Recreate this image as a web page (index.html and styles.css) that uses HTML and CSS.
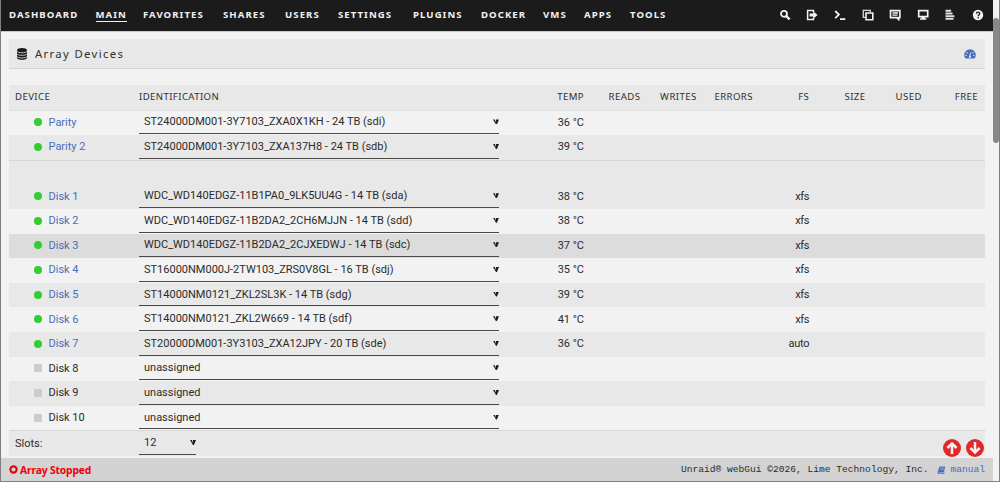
FILE: index.html
```
<!DOCTYPE html>
<html lang="en">
    <head>
        <meta charset="utf-8">
        <title>Main</title>
        <link rel="stylesheet" href="styles.css">
    </head>
    <body>
        <div id="page">
            <div id="header">
                <div class="tabs">
                    <a>DASHBOARD</a><a class="active">MAIN</a><a>FAVORITES</a><a>SHARES</a><a>USERS</a><a>SETTINGS</a><a>PLUGINS</a><a>DOCKER</a><a>VMS</a><a>APPS</a><a>TOOLS</a>
                </div>
                <div class="tools">
                    <svg viewBox="0 0 12 12"><circle cx="5" cy="4.8" r="3" fill="none" stroke="#f2f2f2" stroke-width="1.8"/><path d="M7.2 7l3.4 3.4" stroke="#f2f2f2" stroke-width="2.4"/></svg>
                    <svg viewBox="0 0 12 12"><path d="M7.5 3V1.5H1.6v9h5.9V9" fill="none" stroke="#f2f2f2" stroke-width="1.5"/><path d="M3.6 4.6h3.6V2.2L11.6 6 7.2 9.8V7.4H3.6z" fill="#f2f2f2"/></svg>
                    <svg viewBox="0 0 12 12"><path d="M1.2 2l3.7 3.6-3.7 3.6M6 10.2h5.3" fill="none" stroke="#f2f2f2" stroke-width="1.8"/></svg>
                    <svg viewBox="0 0 12 12"><path d="M3 8.3H1.3V1.3h7V3" fill="none" stroke="#d8d8d8" stroke-width="1.3"/><path d="M4 4h6.8v6.8H4z" fill="none" stroke="#f2f2f2" stroke-width="1.6"/></svg>
                    <svg viewBox="0 0 12 12"><path d="M1.5 1.6h9.4v7H9.6v1.9L7.7 8.6H1.5z" fill="none" stroke="#f2f2f2" stroke-width="1.6"/><path d="M3.5 4h5.5M3.5 6.1h5" stroke="#f2f2f2" stroke-width="1.4"/></svg>
                    <svg viewBox="0 0 12 12"><path d="M1.7 1.7h9v6h-9z" fill="none" stroke="#f2f2f2" stroke-width="1.7"/><path d="M4.6 8h3.2v1.3h1.5v1.5H3.1V9.3h1.5z" fill="#f2f2f2"/></svg>
                    <svg viewBox="0 0 12 12"><path d="M1.5 1.8h5.6M1.5 4.5h7M1.5 7.2h8.9M1.5 9.9h8" stroke="#e2e2e2" stroke-width="1.9"/></svg>
                    <svg viewBox="0 0 12 12"><circle cx="6" cy="6" r="5.2" fill="#f2f2f2"/><path d="M4.4 4.8c0-2.3 3.4-2.1 3.4-.3 0 1.2-1.6 1.1-1.6 2.5M6.2 7.8v1.4" fill="none" stroke="#1c1b1b" stroke-width="1.3"/></svg>
                </div>
            </div>

            <div class="title">
                <svg class="db" viewBox="0 0 10 12"><path d="M0 2.2C0-.6 10-.6 10 2.2v7.5c0 2.8-10 2.8-10 0z" fill="#1c1b1b"/><path d="M0 3.3c1 1.9 9 1.9 10 0M0 5.9c1 1.9 9 1.9 10 0M0 8.5c1 1.9 9 1.9 10 0" fill="none" stroke="#e8e8e8" stroke-width=".8"/></svg>
                <span>Array Devices</span>
                <svg class="gauge" viewBox="0 0 12 10"><path d="M1.4 9.6A5.8 5.8 0 1 1 10.6 9.6z" fill="#486dba"/><path d="M5.5 8l1.2-4.4" stroke="#e8e8e8" stroke-width="1"/><g fill="#e8e8e8"><circle cx="6" cy="8" r="1.1"/><circle cx="2.1" cy="6.4" r=".7"/><circle cx="3.1" cy="3.7" r=".7"/><circle cx="9" cy="3.7" r=".7"/><circle cx="9.9" cy="6.4" r=".7"/></g></svg>
            </div>

            <div class="disks">
                <div class="row head"><span>DEVICE</span><span>IDENTIFICATION</span><span>TEMP</span><span>READS</span><span>WRITES</span><span>ERRORS</span><span>FS</span><span>SIZE</span><span>USED</span><span>FREE</span></div>
                <div class="row"><a class="disk">Parity</a><div class="select">ST24000DM001-3Y7103_ZXA0X1KH - 24 TB (sdi)</div><span class="temp">36 °C</span></div>
                <div class="row odd"><a class="disk">Parity 2</a><div class="select">ST24000DM001-3Y7103_ZXA137H8 - 24 TB (sdb)</div><span class="temp">39 °C</span></div>
                <div class="row odd line"></div>
                <div class="row odd"><a class="disk">Disk 1</a><div class="select">WDC_WD140EDGZ-11B1PA0_9LK5UU4G - 14 TB (sda)</div><span class="temp">38 °C</span><span class="fs">xfs</span></div>
                <div class="row"><a class="disk">Disk 2</a><div class="select">WDC_WD140EDGZ-11B2DA2_2CH6MJJN - 14 TB (sdd)</div><span class="temp">38 °C</span><span class="fs">xfs</span></div>
                <div class="row hover"><a class="disk">Disk 3</a><div class="select">WDC_WD140EDGZ-11B2DA2_2CJXEDWJ - 14 TB (sdc)</div><span class="temp">37 °C</span><span class="fs">xfs</span></div>
                <div class="row"><a class="disk">Disk 4</a><div class="select">ST16000NM000J-2TW103_ZRS0V8GL - 16 TB (sdj)</div><span class="temp">35 °C</span><span class="fs">xfs</span></div>
                <div class="row odd"><a class="disk">Disk 5</a><div class="select">ST14000NM0121_ZKL2SL3K - 14 TB (sdg)</div><span class="temp">39 °C</span><span class="fs">xfs</span></div>
                <div class="row"><a class="disk">Disk 6</a><div class="select">ST14000NM0121_ZKL2W669 - 14 TB (sdf)</div><span class="temp">41 °C</span><span class="fs">xfs</span></div>
                <div class="row odd"><a class="disk">Disk 7</a><div class="select">ST20000DM001-3Y3103_ZXA12JPY - 20 TB (sde)</div><span class="temp">36 °C</span><span class="fs">auto</span></div>
                <div class="row"><span class="disk empty">Disk 8</span><div class="select">unassigned</div></div>
                <div class="row odd"><span class="disk empty">Disk 9</span><div class="select">unassigned</div></div>
                <div class="row"><span class="disk empty">Disk 10</span><div class="select">unassigned</div></div>
                <div class="row odd line slots"><span>Slots:</span><div class="select short">12</div></div>
            </div>

            <div id="footer">
                <svg class="stop" viewBox="0 0 10 10"><circle cx="5" cy="5" r="3.5" fill="none" stroke="#f0000c" stroke-width="2.4"/></svg>
                <b>Array Stopped</b>
                <span class="copy">Unraid® webGui ©2026, Lime Technology, Inc.</span>
                <svg class="book" viewBox="0 0 9 9"><path d="M2.4.5h6.3L7 7.2H1.6c-.8 0-.6 1 0 1H7.5L9 3.2 7.6 8.9H1.2C0 8.9-.2 7.8.2 6.8z" fill="#486dba"/><path d="M3.4 2.2h3.8M3 3.8h3.8" stroke="#d3d3d3" stroke-width=".6"/></svg>
                <a class="manual">manual</a>
            </div>
        </div>

        <div class="jump">
            <svg viewBox="0 0 18 18"><circle cx="9" cy="9" r="9" fill="#e22828"/><path d="M9 15V4.6M4.4 9L9 4.4 13.6 9" fill="none" stroke="#f2f2f2" stroke-width="2.5"/></svg>
            <svg viewBox="0 0 18 18"><circle cx="9" cy="9" r="9" fill="#e22828"/><path d="M9 3v10.4M4.4 9L9 13.6 13.6 9" fill="none" stroke="#f2f2f2" stroke-width="2.5"/></svg>
        </div>

        <div class="scroll"><div class="thumb"></div></div>
    </body>
</html>
```
FILE: styles.css
```
* {
    box-sizing: border-box;
}
body {
    margin: 0;
    height: 482px;
    display: flex;
    overflow: hidden;
    background-color: #f2f2f2;
    border: 1px solid #808080;
    border-top: none;
    font-family: "Noto Sans", sans-serif;
    font-size: 11px;
    color: #2c2b2b;
}
#page {
    width: 992px;
    display: flex;
    flex-direction: column;
}
#header {
    height: 32px;
    flex: none;
    display: flex;
    justify-content: space-between;
    background-color: #1c1b1b;
    border-bottom: 1px solid #c8c8c8;
    padding: 0 9px 0 8px;
}
.tabs {
    display: grid;
    grid-template-columns: 86.5px 47.5px 80px 62px 53px 75px 68px 62px 41px 46px auto;
    font-size: 9.6px;
    font-weight: bold;
    letter-spacing: 1.05px;
    line-height: 30px;
    color: #f2f2f2;
}
.active {
    justify-self: start;
    height: 22px;
    border-bottom: 1px solid #f2f2f2;
}
.tools {
    display: flex;
    align-items: center;
    gap: 15.6px;
    padding-bottom: 1px;
}
.tools svg {
    width: 12px;
    height: 12px;
}
.title {
    height: 30px;
    flex: none;
    margin: 7px 8px 16px;
    display: flex;
    align-items: center;
    background-color: #e8e8e8;
    border-bottom: 1px solid #d6d6d6;
    padding: 0 9px 0 8px;
    font-size: 11.3px;
    letter-spacing: 1.35px;
}
.title span {
    flex: 1;
    color: #303030;
}
.db {
    width: 10px;
    height: 12px;
    margin-right: 8px;
}
.gauge {
    width: 12px;
    height: 10px;
}
.disks {
    flex: 1;
    margin: 0 8px;
}
.row {
    height: 24.6px;
    display: grid;
    grid-template-columns: 130px 360px 85px repeat(7, 56.3px);
    align-items: center;
    text-align: right;
    font-family: Roboto, "Noto Sans", sans-serif;
}
.row > :first-child, .row > :nth-child(2) {
    text-align: left;
}
.head {
    height: 25.6px;
    background-color: #e8e8e8;
    border-bottom: 1px solid #e0e0e0;
    font-family: "Noto Sans", sans-serif;
    font-size: 9.6px;
    letter-spacing: .4px;
    color: #303030;
}
.head span {
    padding-bottom: 1px;
}
.head span:first-child, .slots span {
    padding-left: 6px;
}
.odd {
    background-color: #e8e8e8;
}
.hover {
    background-color: #dcdcdc;
}
.line {
    border-top: 1px solid #d8d8d8;
}
.disk {
    display: flex;
    align-items: center;
    padding-left: 25px;
    padding-bottom: 1px;
    color: #486dba;
}
.temp, .fs {
    padding-bottom: 1px;
}
.disk::before {
    content: "";
    width: 8px;
    height: 8px;
    margin-right: 6.5px;
    border-radius: 50%;
    background-color: #33cc33;
}
.empty {
    color: #2c2b2b;
}
.empty::before {
    border-radius: 1px;
    background-color: #cccccc;
}
.select {
    height: 23.6px;
    align-self: start;
    display: flex;
    align-items: center;
    justify-content: space-between;
    border-bottom: 1px solid #4a4a4a;
    padding-left: 5px;
}
.select::after {
    content: "";
    width: 6px;
    height: 5px;
    background-color: #1c1b1b;
    clip-path: polygon(0 0, 30% 0, 40% 60%, 50% 0, 100% 0, 65% 100%, 50% 100%);
}
.short {
    width: 57px;
}
.fs {
    grid-column: 7;
    letter-spacing: -.3px;
}
.slots {
    height: 25.6px;
}
.slots span {
    padding-bottom: 1px;
}
#footer {
    height: 23px;
    flex: none;
    display: flex;
    align-items: center;
    background-color: #d3d3d3;
    padding: 0 8px 0 8px;
}
#footer b {
    color: #f0000c;
    margin-left: 2px;
    font-size: 10.3px;
    letter-spacing: -.15px;
}
.stop {
    width: 9px;
    height: 9px;
}
.copy, .manual {
    font-family: "Liberation Mono", monospace;
    font-size: 9.6px;
}
.copy {
    margin-left: auto;
}
.book {
    width: 9px;
    height: 8px;
    margin: 0 4px 0 9px;
}
.manual {
    color: #486dba;
}
.jump {
    position: absolute;
    left: 943px;
    top: 439px;
    display: flex;
    gap: 5px;
}
.jump svg {
    width: 18px;
    height: 18px;
}
.scroll {
    width: 6px;
    padding-top: 18px;
}
.thumb {
    height: 125px;
    background-color: #888888;
    border-radius: 3px;
}
```
